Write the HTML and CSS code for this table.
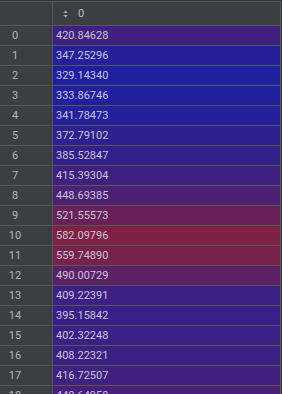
FILE: index.html
```html
<!DOCTYPE html>
<html lang="en">
<head>
<meta charset="utf-8">
<title>Series</title>
<link rel="stylesheet" href="styles.css">
</head>
<body>
<div class="frame">
  <div class="row head">
    <div class="idx"></div>
    <div class="val">
      <svg class="sort" width="5" height="8" viewBox="0 0 5 8" aria-hidden="true">
        <path d="M2.5 0.5 L4.8 3 L0.2 3 Z" fill="#a8a8a8"/>
        <path d="M0.2 5 L4.8 5 L2.5 7.5 Z" fill="#a8a8a8"/>
      </svg>
      <span class="title">0</span>
    </div>
  </div>
  <div class="row"><div class="idx">0</div><div class="val" style="background:rgb(66,32,127)">420.84628</div></div>
  <div class="row"><div class="idx">1</div><div class="val" style="background:rgb(37,32,153)">347.25296</div></div>
  <div class="row"><div class="idx">2</div><div class="val" style="background:rgb(30,32,160)">329.14340</div></div>
  <div class="row"><div class="idx">3</div><div class="val" style="background:rgb(32,32,158)">333.86746</div></div>
  <div class="row"><div class="idx">4</div><div class="val" style="background:rgb(35,32,155)">341.78473</div></div>
  <div class="row"><div class="idx">5</div><div class="val" style="background:rgb(47,32,144)">372.79102</div></div>
  <div class="row"><div class="idx">6</div><div class="val" style="background:rgb(52,32,139)">385.52847</div></div>
  <div class="row"><div class="idx">7</div><div class="val" style="background:rgb(63,32,129)">415.39304</div></div>
  <div class="row"><div class="idx">8</div><div class="val" style="background:rgb(76,32,117)">448.69385</div></div>
  <div class="row"><div class="idx">9</div><div class="val" style="background:rgb(105,33,90)">521.55573</div></div>
  <div class="row"><div class="idx">10</div><div class="val" style="background:rgb(128,33,68)">582.09796</div></div>
  <div class="row"><div class="idx">11</div><div class="val" style="background:rgb(119,33,76)">559.74890</div></div>
  <div class="row"><div class="idx">12</div><div class="val" style="background:rgb(92,33,101)">490.00729</div></div>
  <div class="row"><div class="idx">13</div><div class="val" style="background:rgb(61,32,131)">409.22391</div></div>
  <div class="row"><div class="idx">14</div><div class="val" style="background:rgb(56,32,136)">395.15842</div></div>
  <div class="row"><div class="idx">15</div><div class="val" style="background:rgb(58,32,133)">402.32248</div></div>
  <div class="row"><div class="idx">16</div><div class="val" style="background:rgb(61,32,131)">408.22321</div></div>
  <div class="row"><div class="idx">17</div><div class="val" style="background:rgb(64,32,128)">416.72507</div></div>
  <div class="row"><div class="idx">18</div><div class="val" style="background:rgb(73,32,119)">440.64958</div></div>
</div>
</body>
</html>
```

FILE: styles.css
```css
html, body {
  margin: 0;
  padding: 0;
  background: #313335;
  overflow: hidden;
}

body {
  font-family: Roboto, "Liberation Sans", sans-serif;
  font-size: 11px;
  color: #bbbbbb;
}

/* table frame: top and right edges carry the grid line colour */
.frame {
  width: 281px;
  margin-top: 1px;
  box-sizing: border-box;
  border-top: 1px solid #555759;
  border-right: 1px solid #555759;
  background: #3c3f41;
}

.row {
  display: grid;
  grid-template-columns: 52px 1fr;
  height: 20px;
  box-sizing: border-box;
  border-bottom: 1px solid #555759;
}

.row.head {
  height: 24px;
}

.idx {
  display: flex;
  align-items: center;
  justify-content: center;
  padding-right: 22px;
  background: #3c3f41;
  color: #b4b4b4;
}

.val {
  display: flex;
  align-items: center;
  padding-left: 3px;
  border-left: 1px solid #555759;
  color: #c8c4d8;
}

.head .val {
  padding-left: 10px;
  background: #3c3f41;
  color: #bbbbbb;
}

.sort {
  display: block;
  margin-right: 10px;
}

.title {
  line-height: 1;
}
```
